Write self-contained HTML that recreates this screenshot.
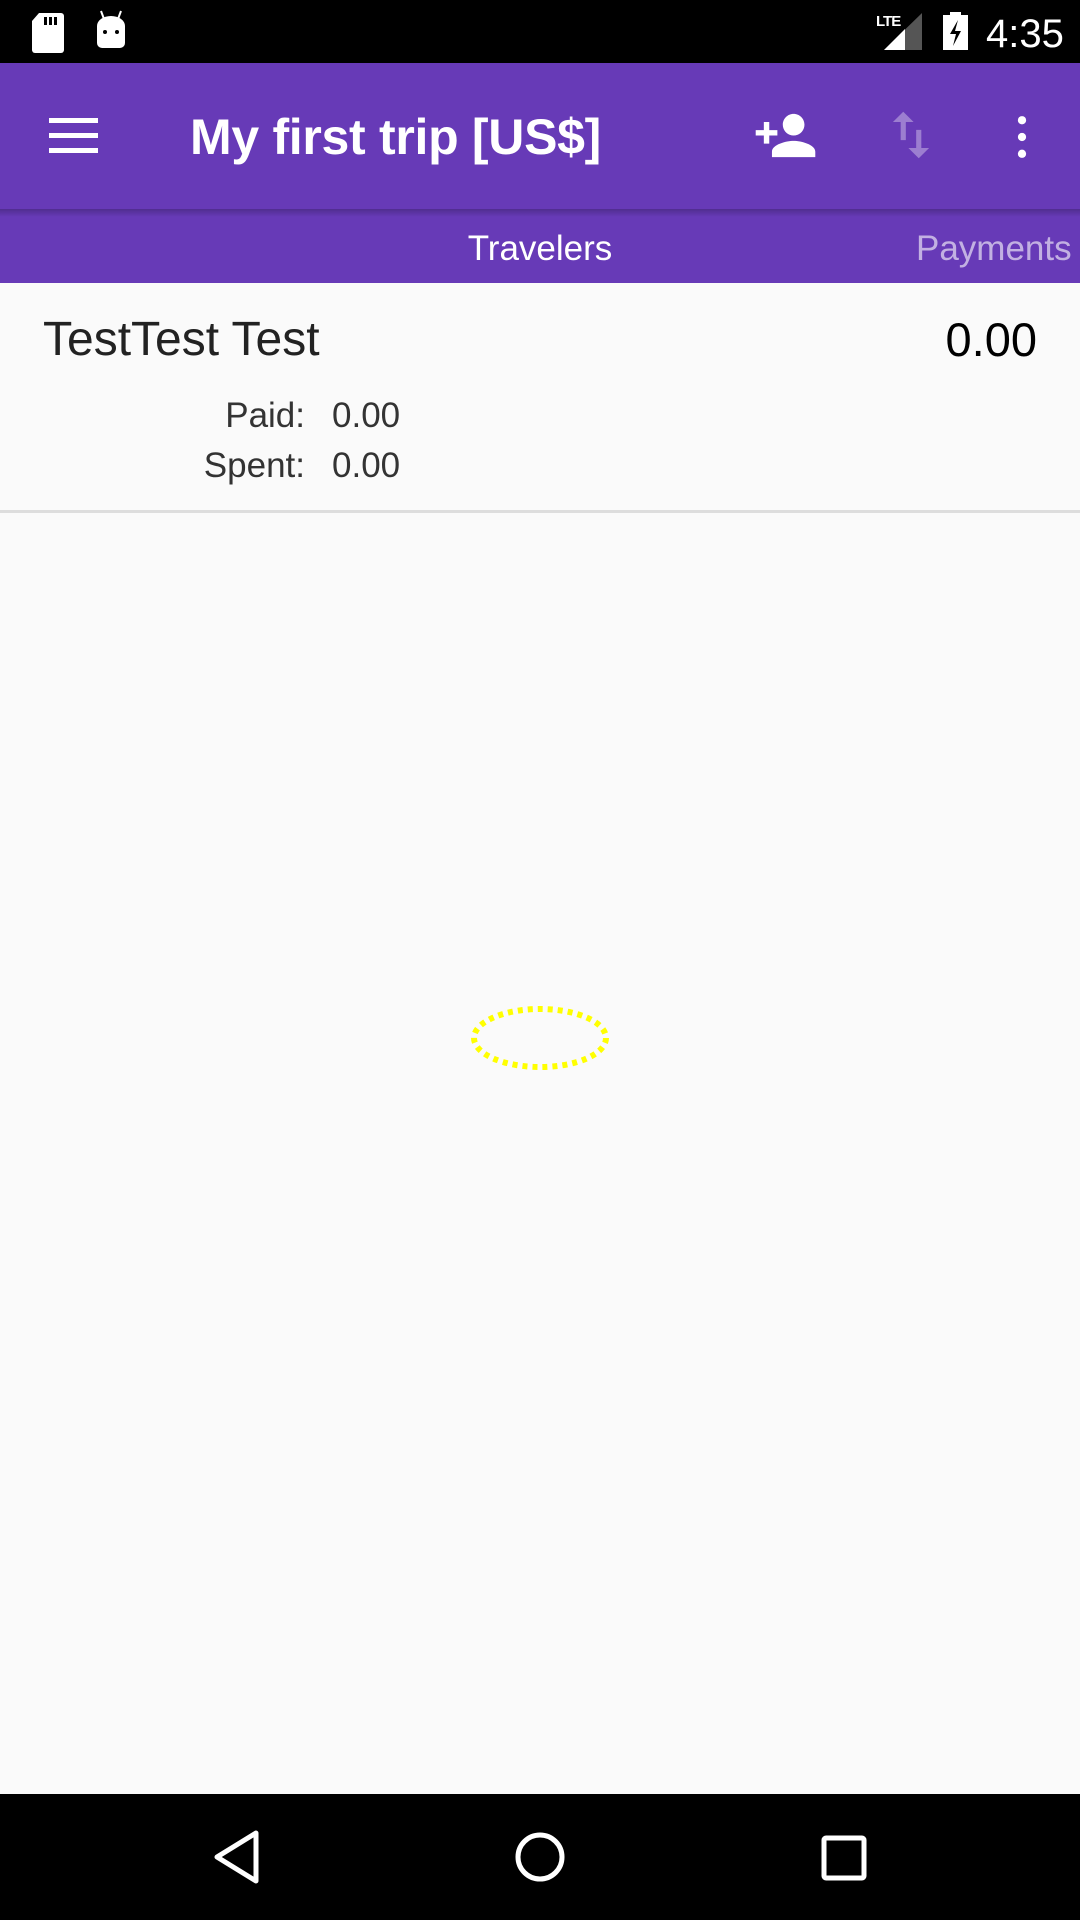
<!DOCTYPE html>
<html><head><meta charset="utf-8"><style>
*{margin:0;padding:0;box-sizing:border-box}
body{width:1080px;height:1920px;background:#fafafa;font-family:"Liberation Sans",sans-serif;position:relative;overflow:hidden}
.abs{position:absolute}
</style></head><body>
<div class="abs" style="left:0;top:0;width:1080px;height:63px;background:#000"></div>
<svg class="abs" style="left:31px;top:13px" width="34" height="40" viewBox="0 0 34 40"><path d="M8 0H30a3 3 0 0 1 3 3V37a3 3 0 0 1-3 3H4a3 3 0 0 1-3-3V8z" fill="#fff"/><rect x="13" y="4" width="3" height="8" fill="#000"/><rect x="18" y="4" width="3" height="8" fill="#000"/><rect x="23" y="4" width="3" height="8" fill="#000"/></svg>
<svg class="abs" style="left:94px;top:10px" width="34" height="40" viewBox="0 0 34 40"><path d="M7 1l3 8M27 1l-3 8" stroke="#fff" stroke-width="2"/><path d="M3 16a14 10 0 0 1 28 0V33a5 5 0 0 1-5 5H8a5 5 0 0 1-5-5z" fill="#fff"/><circle cx="11" cy="22" r="2" fill="#000"/><circle cx="23" cy="22" r="2" fill="#000"/></svg>
<div class="abs" style="left:876px;top:13px;color:#fff;font-size:15px;font-weight:bold;letter-spacing:-1px">LTE</div>
<svg class="abs" style="left:884px;top:13px" width="38" height="37" viewBox="0 0 38 37"><path d="M38 0V37H0z" fill="#555"/><path d="M21 16V37H0z" fill="#fff"/></svg>
<svg class="abs" style="left:943px;top:12px" width="25" height="38" viewBox="0 0 25 38"><rect x="7" y="0" width="11" height="4" fill="#fff"/><rect x="0" y="3" width="25" height="35" fill="#fff"/><path d="M15 8L7 22h6l-3 12 8-15h-6z" fill="#000"/></svg>
<div class="abs" style="left:986px;top:12px;color:#fff;font-size:40px">4:35</div>

<div class="abs" style="left:0;top:63px;width:1080px;height:220px;background:#673ab7"></div>
<div class="abs" style="left:0;top:209px;width:1080px;height:8px;background:linear-gradient(rgba(0,0,0,0.22),rgba(0,0,0,0))"></div>
<div class="abs" style="left:49px;top:118px;width:49px;height:5px;background:#fff"></div>
<div class="abs" style="left:49px;top:133px;width:49px;height:5px;background:#fff"></div>
<div class="abs" style="left:49px;top:148px;width:49px;height:5px;background:#fff"></div>
<div class="abs" style="left:190px;top:108px;color:#fff;font-size:50px;font-weight:bold;letter-spacing:-0.3px;white-space:nowrap">My first trip [US$]</div>
<svg class="abs" style="left:753px;top:103px" width="65" height="65" viewBox="0 0 24 24"><path fill="#fff" d="M15 12c2.21 0 4-1.79 4-4s-1.79-4-4-4-4 1.79-4 4 1.79 4 4 4zm-9-2V7H4v3H1v2h3v3h2v-3h3v-2H6zm9 4c-2.67 0-8 1.34-8 4v2h16v-2c0-2.660-5.33-4-8-4z"/></svg>
<svg class="abs" style="left:880px;top:104px" width="62" height="62" viewBox="0 0 24 24"><path fill="#fff" fill-opacity="0.35" d="M16 17.01V10h-2v7.01h-3L15 21l4-3.990h-3zM9 3L5 6.99h3V14h2V6.99h3L9 3z"/></svg>
<svg class="abs" style="left:991px;top:106px" width="62" height="62" viewBox="0 0 24 24"><circle cx="12" cy="5.5" r="1.6" fill="#fff"/><circle cx="12" cy="12" r="1.6" fill="#fff"/><circle cx="12" cy="18.5" r="1.6" fill="#fff"/></svg>
<div class="abs" style="left:0;top:229px;width:1080px;text-align:center;color:#fff;font-size:35px">Travelers</div>
<div class="abs" style="left:916px;top:229px;color:rgba(255,255,255,0.6);font-size:35px;white-space:nowrap">Payments</div>

<div class="abs" style="left:43px;top:312px;color:#222;font-size:48px">TestTest Test</div>
<div class="abs" style="right:43px;top:312px;color:#000;font-size:47px">0.00</div>
<div class="abs" style="right:775px;top:396px;color:#333;font-size:35px">Paid:</div>
<div class="abs" style="left:332px;top:396px;color:#333;font-size:35px">0.00</div>
<div class="abs" style="right:775px;top:446px;color:#333;font-size:35px">Spent:</div>
<div class="abs" style="left:332px;top:446px;color:#333;font-size:35px">0.00</div>
<div class="abs" style="left:0;top:510px;width:1080px;height:3px;background:#ddd"></div>

<svg class="abs" style="left:460px;top:998px" width="160" height="80" viewBox="0 0 160 80"><ellipse cx="80" cy="40" rx="66" ry="29" fill="none" stroke="#ffff00" stroke-width="6" stroke-dasharray="5 5"/></svg>

<div class="abs" style="left:0;top:1794px;width:1080px;height:126px;background:#000"></div>
<svg class="abs" style="left:210px;top:1828px" width="54" height="58" viewBox="0 0 54 58"><path d="M46 5V53L7 29z" fill="none" stroke="#fff" stroke-width="5" stroke-linejoin="round"/></svg>
<svg class="abs" style="left:510px;top:1827px" width="60" height="60" viewBox="0 0 60 60"><circle cx="30" cy="30" r="22" fill="none" stroke="#fff" stroke-width="5"/></svg>
<svg class="abs" style="left:818px;top:1832px" width="52" height="52" viewBox="0 0 52 52"><rect x="6" y="6" width="40" height="40" rx="2" fill="none" stroke="#fff" stroke-width="5"/></svg>
</body></html>
